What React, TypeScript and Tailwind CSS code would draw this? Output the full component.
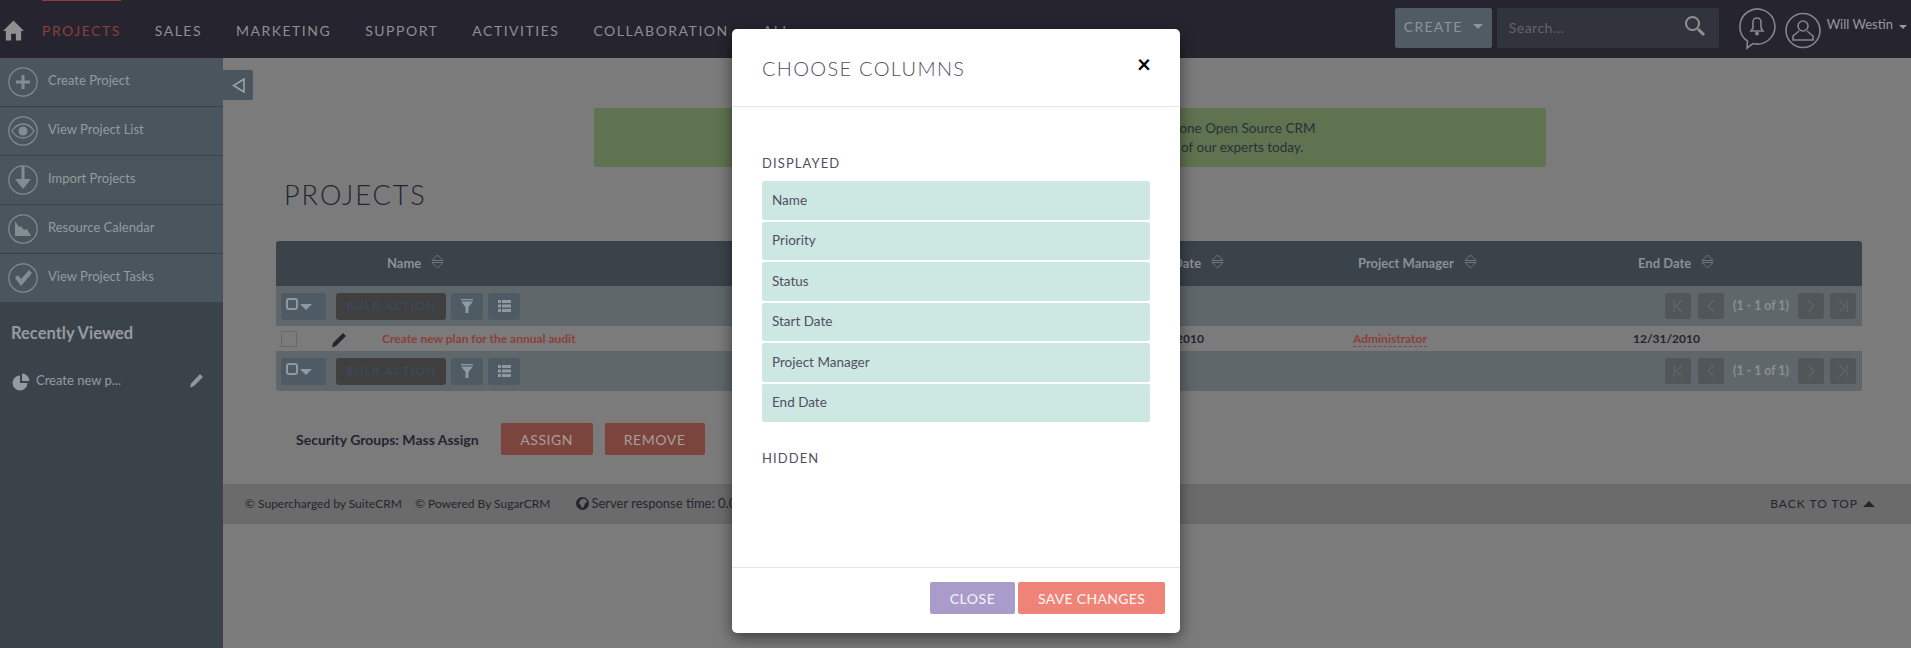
const ROW_GRID = "grid grid-cols-[50px_56px_360px_190px_205px_216px_280px_1fr] items-center";

function SortIcon() {
  return (
    <svg width="13" height="15" viewBox="0 0 13 15" fill="none" stroke="#6f777c" strokeWidth="1" className="ml-[10px] mb-[4px] shrink-0">
      <path d="M1 6.5 L6.5 1 L12 6.5 Z" />
      <path d="M1 8.5 L6.5 14 L12 8.5 Z" />
    </svg>
  );
}

function HeadCell({ label }: { label: string }) {
  return (
    <div className="flex items-center pl-[5px] font-bold text-[13px] text-[#8c9093]">
      <span>{label}</span>
      <SortIcon />
    </div>
  );
}

function CircleIcon({ children }: { children: React.ReactNode }) {
  return (
    <svg width="30" height="30" viewBox="0 0 30 30" className="shrink-0">
      <circle cx="15" cy="15" r="14.2" fill="none" stroke="#838c91" strokeWidth="1.2" />
      {children}
    </svg>
  );
}

const sideItems = [
  {
    label: "Create Project",
    icon: <path d="M13.5 8h3v5.5H22v3h-5.5V22h-3v-5.5H8v-3h5.5z" fill="#838c91" />,
  },
  {
    label: "View Project List",
    icon: (
      <>
        <path d="M4 15c3-5 7-7 11-7s8 2 11 7c-3 5-7 7-11 7s-8-2-11-7z" fill="none" stroke="#838c91" strokeWidth="1.3" />
        <circle cx="15" cy="15" r="4.5" fill="#838c91" />
      </>
    ),
  },
  {
    label: "Import Projects",
    icon: <path d="M13.5 1h3v13H23l-8 10-8-10h6.5z" fill="#838c91" />,
  },
  {
    label: "Resource Calendar",
    icon: <path d="M7 7l4 6 2-1 3 4 3-1 4 7H7z" fill="#838c91" />,
  },
  {
    label: "View Project Tasks",
    icon: <path d="M7 15l3-3 3 4 8-9 3 3-11 13z" fill="#838c91" />,
  },
];

function Sidebar() {
  return (
    <aside className="w-[223px] shrink-0 bg-[#3b434a]">
      {sideItems.map((item) => (
        <div key={item.label} className="flex h-[49px] items-center gap-[10px] border-b border-[#39424a] bg-[#4b555d] pl-[8px] last:border-b-0">
          <CircleIcon>{item.icon}</CircleIcon>
          <span className="mb-[3px] text-[13px] text-[#959b9f]">{item.label}</span>
        </div>
      ))}
      <h3 className="mt-[19px] pl-[11px] text-[16.5px] font-bold leading-[22px] text-[#979b9e]">Recently Viewed</h3>
      <div className="mt-[26px] flex items-center pl-[12px] pr-[19px]">
        <svg width="18" height="18" viewBox="0 0 18 18" fill="#949a9e" className="shrink-0 mt-[3px]">
          <path d="M8 2.5A7.5 7.5 0 1 0 15.5 10H8z" />
          <path d="M10 0.5A7.5 7.5 0 0 1 17.5 8H10z" />
        </svg>
        <span className="ml-[6px] flex-1 text-[13px] text-[#959b9f]">Create new p...</span>
        <svg width="15" height="15" viewBox="0 0 15 15" fill="#8e979c" className="shrink-0">
          <path d="M11 1l3 3-9 9-4 1.5L2 10.5z" />
        </svg>
      </div>
    </aside>
  );
}

function TopNav() {
  return (
    <header className="relative flex h-[58px] shrink-0 items-center bg-[#26242f] pr-[4px]">
      <div className="absolute left-[42px] top-0 h-[1px] w-[79px] bg-[#8a403a]" />
      <svg width="21" height="21" viewBox="0 0 22 21" fill="#8f9191" className="ml-[3px] mt-[2px] shrink-0">
        <path d="M11 0 L22 11 H19 V21 H13.5 V14 H8.5 V21 H3 V11 H0 Z" />
      </svg>
      <nav className="ml-[18px] mt-[3px] flex gap-[34px] text-[14px] tracking-[1.5px] text-[#8e8f91]">
        <span className="text-[#8a403a]">PROJECTS</span>
        <span>SALES</span>
        <span>MARKETING</span>
        <span>SUPPORT</span>
        <span>ACTIVITIES</span>
        <span>COLLABORATION</span>
        <span>ALL</span>
      </nav>
      <div className="ml-auto mb-[2px] flex h-[40px] w-[97px] items-center justify-center gap-[10px] rounded-[2px] bg-[#515b63] pb-[4px] text-[14px] tracking-[1.3px] text-[#8e9498]">
        CREATE
        <span className="h-0 w-0 border-x-[5px] border-t-[5px] border-x-transparent border-t-[#8e9498]" />
      </div>
      <div className="ml-[5px] mb-[2px] flex h-[40px] w-[222px] items-center justify-between rounded-[2px] bg-[#31343c] pb-[1px] pl-[12px] pr-[13px] text-[14px] tracking-[0.5px] text-[#62666b]">
        Search...
        <svg width="22" height="22" viewBox="0 0 22 22" fill="none" stroke="#8e9194" className="mb-[4px]">
          <circle cx="8.5" cy="8.5" r="6.5" strokeWidth="2" />
          <path d="M14 14l6 6" strokeWidth="3" />
        </svg>
      </div>
      <svg width="38" height="42" viewBox="0 0 38 42" fill="none" className="ml-[19px] shrink-0">
        <path d="M9 40 L9.5 33 A17.5 17.5 0 1 1 15 35.5 Z" stroke="#858688" strokeWidth="1.6" />
        <path d="M19 10a4 4 0 0 1 4 4v6l2 3H13l2-3v-6a4 4 0 0 1 4-4z" fill="none" stroke="#858688" strokeWidth="1.6" />
        <circle cx="19" cy="25.5" r="2" fill="#858688" />
      </svg>
      <svg width="36" height="37" viewBox="0 0 36 37" fill="none" className="ml-[9px] mt-[2px] shrink-0">
        <circle cx="18" cy="18.5" r="17" stroke="#858688" strokeWidth="1.6" />
        <circle cx="18" cy="14" r="5" stroke="#858688" strokeWidth="1.6" />
        <path d="M14 19l-6 5v4h20v-4l-6-5" stroke="#858688" strokeWidth="1.6" />
      </svg>
      <div className="ml-[6px] mb-[9px] flex items-center gap-[6px] whitespace-nowrap text-[13px] text-[#989a9c]">
        Will Westin
        <span className="mt-[4px] h-0 w-0 border-x-[4px] border-t-[4px] border-x-transparent border-t-[#989a9c]" />
      </div>
    </header>
  );
}

function PageButton({ children }: { children: React.ReactNode }) {
  return <span className="flex h-[26px] w-[26px] items-center justify-center rounded-[3px] bg-[#515659]">{children}</span>;
}

function Toolbar({ rounded }: { rounded?: boolean }) {
  return (
    <div className={`flex h-[40px] items-center bg-[#60676b] pl-[5px] pr-[6px] ${rounded ? "rounded-b-[3px]" : ""}`}>
      <span className="flex h-[27px] w-[45px] items-center gap-[2px] rounded-[3px] bg-[#4f5b64] pl-[5px] pb-[5px]">
        <span className="h-[12px] w-[12px] rounded-[3px] border-2 border-[#8f999f]" />
        <span className="mt-[6px] h-0 w-0 border-x-[6px] border-t-[6px] border-x-transparent border-t-[#8f999f]" />
      </span>
      <span className="ml-[10px] flex h-[27px] w-[110px] items-center rounded-[3px] bg-[#3f3f3f] pl-[10px] text-[11.5px] font-bold tracking-[1.3px] text-[#3a4a58]">
        BULK ACTION
      </span>
      <span className="ml-[5px] flex h-[27px] w-[32px] items-center justify-center rounded-[3px] bg-[#4f5b64]">
        <svg width="12" height="14" viewBox="0 0 12 14" fill="#8f999f">
          <path d="M0 0h12v1.2H0zM0 2.6h12L7.5 8v6h-3V8z" />
        </svg>
      </span>
      <span className="ml-[5px] flex h-[27px] w-[32px] items-center justify-center rounded-[3px] bg-[#4f5b64]">
        <svg width="13" height="12" viewBox="0 0 13 12" fill="#8f999f">
          <path d="M0 0h3v3H0zM4 0h9v3H4zM0 4.5h3v3H0zM4 4.5h9v3H4zM0 9h3v3H0zM4 9h9v3H4z" />
        </svg>
      </span>
      <div className="ml-auto flex items-center">
        <PageButton>
          <svg width="12" height="14" viewBox="0 0 12 14" fill="none" stroke="#5e6467" strokeWidth="1.5">
            <path d="M2 1v12M10 1L4 7l6 6" />
          </svg>
        </PageButton>
        <span className="ml-[7px]">
          <PageButton>
            <svg width="8" height="14" viewBox="0 0 8 14" fill="none" stroke="#5e6467" strokeWidth="1.5">
              <path d="M7 1L1 7l6 6" />
            </svg>
          </PageButton>
        </span>
        <span className="w-[74px] text-center text-[12.3px] font-bold text-[#8b8f92]">(1 - 1 of 1)</span>
        <PageButton>
          <svg width="8" height="14" viewBox="0 0 8 14" fill="none" stroke="#5e6467" strokeWidth="1.5">
            <path d="M1 1l6 6-6 6" />
          </svg>
        </PageButton>
        <span className="ml-[6px]">
          <PageButton>
            <svg width="12" height="14" viewBox="0 0 12 14" fill="none" stroke="#5e6467" strokeWidth="1.5">
              <path d="M10 1v12M2 1l6 6-6 6" />
            </svg>
          </PageButton>
        </span>
      </div>
    </div>
  );
}

function ProjectsTable() {
  return (
    <div className="ml-[53px] mr-[49px] mt-[31px]">
      <div className={`${ROW_GRID} h-[45px] rounded-t-[3px] bg-[#3b434a]`}>
        <div />
        <div />
        <HeadCell label="Name" />
        <HeadCell label="Priority" />
        <HeadCell label="Status" />
        <HeadCell label="Start Date" />
        <HeadCell label="Project Manager" />
        <HeadCell label="End Date" />
      </div>
      <Toolbar />
      <div className={`${ROW_GRID} h-[25px] text-[12px] font-bold text-[#26242f]`}>
        <div className="pl-[5px]">
          <span className="block h-[16px] w-[16px] border border-[#66696b]" />
        </div>
        <svg width="16" height="16" viewBox="0 0 16 16" fill="#26242f" className="mt-[2px] ml-[5px]">
          <path d="M12 1l3 3L5 14l-4 1.5L2 11z" />
        </svg>
        <span className="text-[#8a403a]">Create new plan for the annual audit</span>
        <span>High</span>
        <span>Underway</span>
        <span>01/01/2010</span>
        <span>
          <span className="border-b border-dashed border-[#8a403a] text-[#8a403a]">Administrator</span>
        </span>
        <span>12/31/2010</span>
      </div>
      <Toolbar rounded />
    </div>
  );
}

function MainContent() {
  return (
    <main className="flex min-w-0 flex-1 flex-col bg-[#7b7b7b]">
      <div className="pt-[12px]">
        <div className="flex h-[30px] w-[30px] items-center justify-center rounded-r-[2px] bg-[#4b555d]">
          <svg width="13" height="15" viewBox="0 0 13 15" fill="none" stroke="#a0a5a8" strokeWidth="1.5">
            <path d="M12 1v13L1.5 7.5z" />
          </svg>
        </div>
      </div>
      <div className="ml-[371px] mt-[8px] flex h-[59px] w-[952px] flex-col items-center justify-center rounded-[3px] bg-[#5f7350] text-[13.5px] leading-[19px] text-[#2b3038]">
        <span className="pr-[6px]">SuiteCRM is the award-winning and enterprise-class number one Open Source CRM</span>
        <span className="pr-[4px]">Find out more about SuiteCRM and book a demo with one of our experts today.</span>
      </div>
      <h1 className="ml-[61px] mt-[13px] text-[27px] font-light leading-[30px] tracking-[2px] text-[#26242f]">PROJECTS</h1>
      <ProjectsTable />
      <div className="ml-[73px] mt-[32px] flex items-center">
        <span className="text-[14px] font-bold text-[#26242f]">Security Groups: Mass Assign</span>
        <span className="ml-[22px] flex h-[32px] w-[92px] items-center justify-center rounded-[2px] bg-[#7b453e] text-[14px] tracking-[0.5px] text-[#a89d9b]">ASSIGN</span>
        <span className="ml-[12px] flex h-[32px] w-[100px] items-center justify-center rounded-[2px] bg-[#7b453e] text-[14px] tracking-[0.6px] text-[#a89d9b]">REMOVE</span>
      </div>
      <footer className="mt-[29px] flex h-[40px] items-center rounded-tl-[3px] bg-[#6b6b6b] pl-[22px] pr-[36px] text-[12px] text-[#26242f]">
        <span>© Supercharged by SuiteCRM</span>
        <span className="ml-[13px]">© Powered By SugarCRM</span>
        <svg width="13" height="13" viewBox="0 0 13 13" fill="#26242f" className="ml-[26px] mb-[2px]">
          <path d="M6.5 0a6.5 6.5 0 1 0 0 13a6.5 6.5 0 0 0 0-13zM7 1.5l3 1 1 3-2 1-1 3-2 2-1-3-2-2 1-3z" fillRule="evenodd" />
        </svg>
        <span className="ml-[2px] text-[13px]">Server response time: 0.09 seconds.</span>
        <span className="ml-auto flex items-center gap-[5px] text-[12px] tracking-[1px]">
          BACK TO TOP
          <span className="h-0 w-0 border-x-[6px] border-b-[6px] border-x-transparent border-b-[#26242f]" />
        </span>
      </footer>
    </main>
  );
}

function ColumnsModal() {
  const displayed = ["Name", "Priority", "Status", "Start Date", "Project Manager", "End Date"];
  return (
    <div className="absolute left-[732px] top-[29px] flex h-[604px] w-[448px] flex-col rounded-[5px] bg-white shadow-[0_5px_15px_rgba(0,0,0,0.5)]">
      <div className="flex h-[78px] shrink-0 items-start justify-between border-b border-[#e5e5e5] pl-[30px] pr-[30px]">
        <h2 className="mt-[27px] text-[20px] font-light leading-[24px] tracking-[1.3px] text-[#534d64]">CHOOSE COLUMNS</h2>
        <span className="mt-[23px] mr-[-1px] text-[24px] font-bold leading-[24px] text-black">×</span>
      </div>
      <div className="flex-1 px-[30px]">
        <h3 className="mt-[47px] text-[13px] leading-[18px] tracking-[1.1px] text-[#534d64]">DISPLAYED</h3>
        <ul className="mt-[9px] flex h-[241px] flex-col gap-[2px]">
          {displayed.map((name) => (
            <li key={name} className="flex flex-1 items-center rounded-[2px] bg-[#cde8e2] pb-[1px] pl-[10px] text-[13.5px] text-[#534d64]">
              {name}
            </li>
          ))}
        </ul>
        <h3 className="mt-[27px] text-[13px] leading-[18px] tracking-[1.1px] text-[#534d64]">HIDDEN</h3>
      </div>
      <div className="flex h-[66px] shrink-0 justify-end gap-[3px] border-t border-[#e5e5e5] pr-[15px] pt-[14px]">
        <button className="h-[32px] w-[85px] rounded-[2px] bg-[#a99ccb] text-[14px] font-medium tracking-[0.5px] text-[#f3eff8]">CLOSE</button>
        <button className="h-[32px] w-[147px] rounded-[2px] bg-[#f08377] text-[14px] font-medium tracking-[0.3px] text-[#fdf0ee]">SAVE CHANGES</button>
      </div>
    </div>
  );
}

export default function App() {
  return (
    <div className="relative flex h-[648px] w-[1911px] flex-col overflow-hidden font-['Lato',sans-serif]">
      <TopNav />
      <div className="flex flex-1">
        <Sidebar />
        <MainContent />
      </div>
      <ColumnsModal />
    </div>
  );
}
